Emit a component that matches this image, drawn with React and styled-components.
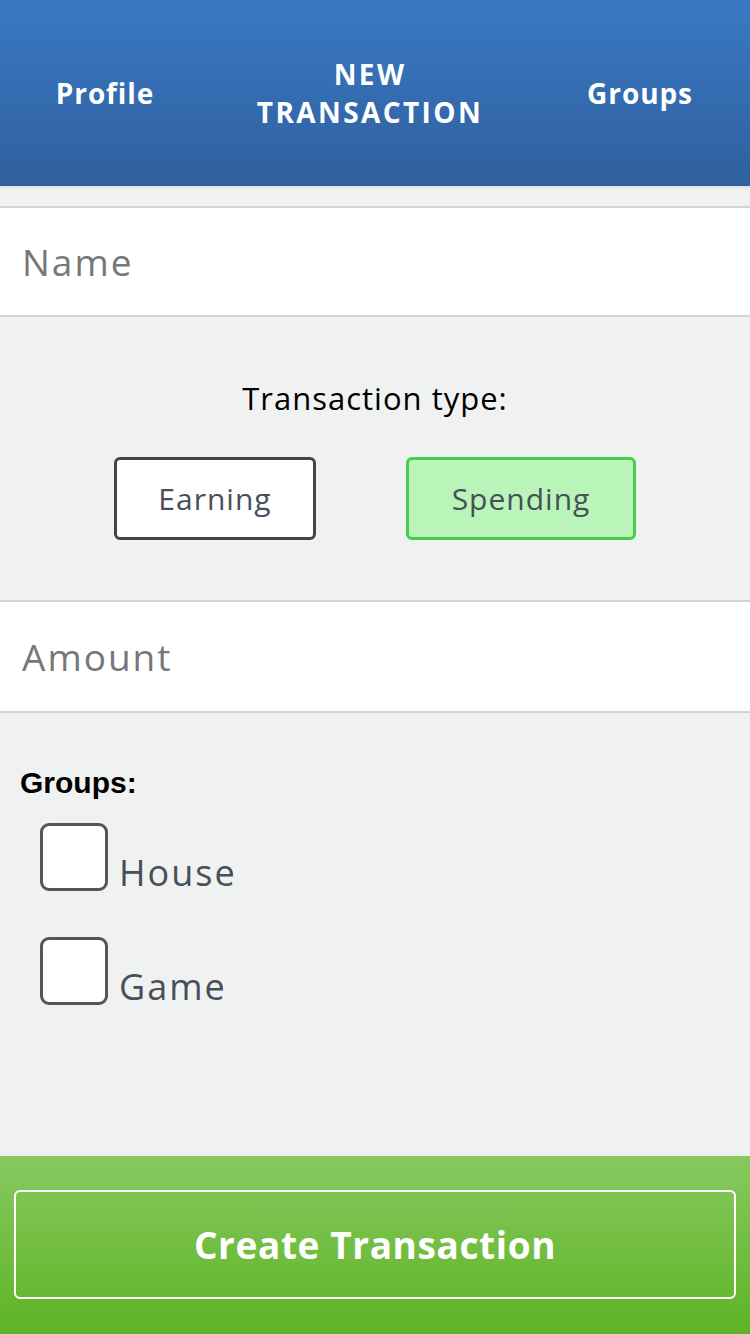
import React, {useState} from "react";
import styled, {createGlobalStyle} from "styled-components";

const colors = {
    blueTop:"#3979c4",blueBottom:"#30609e",page:"#f0f2f1",line:"#d4d4d4",
    placeholder:"#777",text:"#484f58",greenTop:"#87c960",greenBottom:"#5eb325",
};
const font = `"Open Sans","DejaVu Sans",sans-serif`;

const Global = createGlobalStyle`
    html,body{margin:0;padding:0;background:${colors.page};}
    *{box-sizing:border-box;}
`;
const Page = styled.div`
    width:750px;height:1334px;display:flex;flex-direction:column;background:${colors.page};font-family:${font};overflow:hidden;
`;
const Header = styled.header`
    height:186px;flex:none;display:grid;grid-template-columns:210px 1fr 220px;align-items:center;
    background:linear-gradient(to bottom,${colors.blueTop},${colors.blueBottom});
    box-shadow:0 2px 3px rgba(0,0,0,.08);
`;
const NavItem = styled.a`
    color:#fff;font-weight:700;font-size:28px;line-height:38px;text-align:center;text-decoration:none;
    letter-spacing:${p => p.$upper ? 2.4 : 0.9}px;
    text-transform:${p => p.$upper ? "uppercase" : "none"};
`;
const Form = styled.form`
    flex:1;display:flex;flex-direction:column;padding-top:20px;
`;
const Field = styled.input`
    height:${p => p.$height}px;flex:none;border:none;border-top:2px solid ${colors.line};border-bottom:2px solid ${colors.line};background:#fff;
    padding:0 22px;font-family:${font};font-size:37px;letter-spacing:2px;color:#333;outline:none;
    &::placeholder{color:${colors.placeholder};}
`;
const TypeSection = styled.div`
    height:283px;flex:none;display:flex;flex-direction:column;align-items:center;padding-top:62px;
    & .label{font-size:31px;line-height:38px;letter-spacing:1px;color:#000;}
`;
const TypeRow = styled.div`
    display:flex;gap:90px;margin-top:40px;
`;
const TypeButton = styled.button`
    height:83px;width:${p => p.$width}px;border-radius:6px;font-family:${font};font-size:30px;letter-spacing:1px;color:${colors.text};cursor:pointer;
    border:3.5px solid ${p => p.$active ? "#48cc4b" : "#444"};
    background:${p => p.$active ? "#b9f5b9" : "#fff"};
`;
const GroupsSection = styled.div`
    flex:1;display:flex;flex-direction:column;padding:52px 20px 0;
    & .title{font-family:"Liberation Sans",Arial,sans-serif;font-weight:700;font-size:30px;line-height:36px;color:#000;margin:0;}
`;
const CheckRow = styled.label`
    display:flex;align-items:flex-end;gap:11px;padding-left:20px;margin-top:${p => p.$first ? 22 : 55}px;cursor:pointer;
    & span{font-size:36px;line-height:36px;letter-spacing:2px;color:${colors.text};margin-bottom:-9px;}
`;
const Box = styled.span`
    width:68px;height:68px;flex:none;border:3.5px solid #555;border-radius:9px;background:#fff;
`;
const Footer = styled.footer`
    height:178px;flex:none;padding:34px 14px 35px;
    background:linear-gradient(to bottom,${colors.greenTop},${colors.greenBottom});
`;
const Submit = styled.button`
    width:100%;height:100%;border:2px solid #fff;border-radius:6px;background:transparent;color:#fff;
    font-family:${font};font-weight:700;font-size:37px;letter-spacing:0.6px;cursor:pointer;
`;

const groups = ["House","Game"];

const App = () => {
    const [type,setType] = useState("spending");
    return (
        <Page>
            <Global/>
            <Header>
                <NavItem href="#">Profile</NavItem>
                <NavItem href="#" $upper>New<br/>Transaction</NavItem>
                <NavItem href="#">Groups</NavItem>
            </Header>
            <Form onSubmit={e => e.preventDefault()}>
                <Field placeholder="Name" $height={111}/>
                <TypeSection>
                    <div className="label">Transaction type:</div>
                    <TypeRow>
                        <TypeButton type="button" $width={202} $active={type === "earning"} onClick={() => setType("earning")}>Earning</TypeButton>
                        <TypeButton type="button" $width={230} $active={type === "spending"} onClick={() => setType("spending")}>Spending</TypeButton>
                    </TypeRow>
                </TypeSection>
                <Field placeholder="Amount" $height={113}/>
                <GroupsSection>
                    <h3 className="title">Groups:</h3>
                    {groups.map((g,i) => (
                        <CheckRow key={g} $first={i === 0}><Box/><span>{g}</span></CheckRow>
                    ))}
                </GroupsSection>
            </Form>
            <Footer>
                <Submit type="submit">Create Transaction</Submit>
            </Footer>
        </Page>
    );
}
export default App;
